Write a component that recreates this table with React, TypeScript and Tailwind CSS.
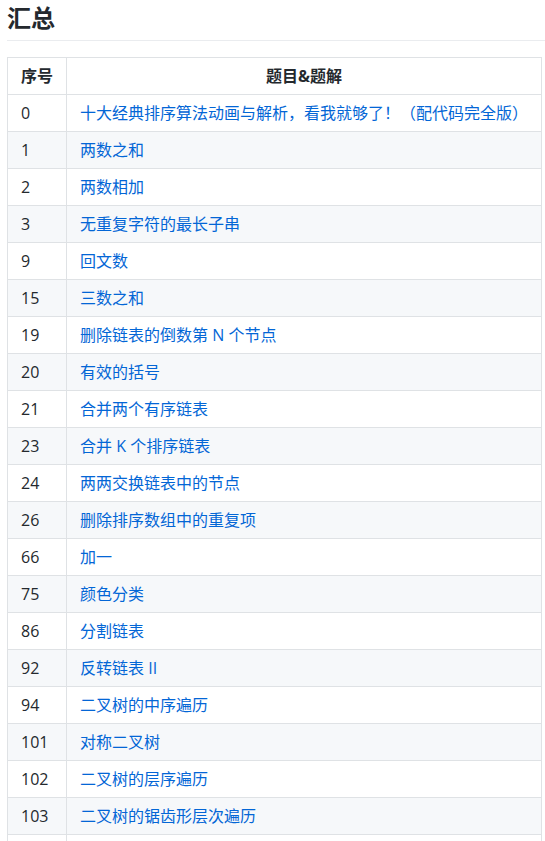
const rows: [string, string][] = [
  ["0", "十大经典排序算法动画与解析，看我就够了！（配代码完全版）"],
  ["1", "两数之和"],
  ["2", "两数相加"],
  ["3", "无重复字符的最长子串"],
  ["9", "回文数"],
  ["15", "三数之和"],
  ["19", "删除链表的倒数第 N 个节点"],
  ["20", "有效的括号"],
  ["21", "合并两个有序链表"],
  ["23", "合并 K 个排序链表"],
  ["24", "两两交换链表中的节点"],
  ["26", "删除排序数组中的重复项"],
  ["66", "加一"],
  ["75", "颜色分类"],
  ["86", "分割链表"],
  ["92", "反转链表 II"],
  ["94", "二叉树的中序遍历"],
  ["101", "对称二叉树"],
  ["102", "二叉树的层序遍历"],
  ["103", "二叉树的锯齿形层次遍历"],
  ["104", "二叉树的最大深度"],
];

export default function App() {
  return (
    <div className="h-[841px] bg-white pl-[7px] pt-[3px] text-[16px] text-[#24292e] font-['Open_Sans','Noto_Sans_CJK_SC',sans-serif] overflow-hidden">
      <h2 className="border-b border-[#eaecef] pb-[7px] text-[24px] font-bold leading-[30px]">
        汇总
      </h2>

      <table className="mt-4 w-[535px] border-collapse leading-[24px]">
        <thead>
          <tr className="bg-white">
            <th className="w-[59px] border border-[#dfe2e5] px-[13px] py-[6px] text-center font-bold whitespace-nowrap">
              序号
            </th>
            <th className="border border-[#dfe2e5] px-[13px] py-[6px] text-center font-bold whitespace-nowrap">
              题目&amp;题解
            </th>
          </tr>
        </thead>
        <tbody>
          {rows.map(([num, title], i) => (
            <tr key={num} className={i % 2 === 1 ? "bg-[#f6f8fa]" : "bg-white"}>
              <td className="w-[59px] border border-[#dfe2e5] px-[13px] py-[6px] whitespace-nowrap">{num}</td>
              <td className="border border-[#dfe2e5] px-[13px] py-[6px] whitespace-nowrap">
                <a href="#" className="text-[#0366d6]">
                  {title}
                </a>
              </td>
            </tr>
          ))}
        </tbody>
      </table>
    </div>
  );
}
